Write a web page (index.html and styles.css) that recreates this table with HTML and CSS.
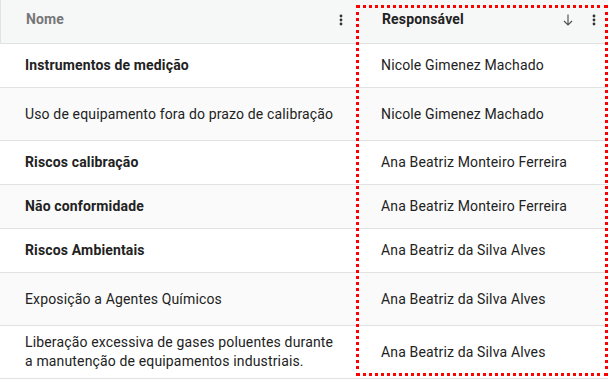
FILE: index.html
```html
<!DOCTYPE html>
<html lang="pt">
<head>
<meta charset="utf-8">
<link rel="stylesheet" href="styles.css">
</head>
<body>
<div class="wrap">
  <div class="table">
    <div class="row head">
      <div class="cell c1 hcell">
        <span class="htitle muted">Nome</span>
        <svg class="kebab k1" width="4" height="12" viewBox="0 0 4 12"><circle cx="2" cy="2" r="1.4"/><circle cx="2" cy="6" r="1.4"/><circle cx="2" cy="10" r="1.4"/></svg>
      </div>
      <div class="cell c2 hcell">
        <span class="htitle">Responsável</span>
        <svg class="arrow" width="10" height="12" viewBox="0 0 10 12"><path d="M5 0.5V11 M1 7l4 4 4-4" fill="none" stroke="#555" stroke-width="1.2"/></svg>
        <svg class="kebab k2" width="4" height="12" viewBox="0 0 4 12"><circle cx="2" cy="2" r="1.4"/><circle cx="2" cy="6" r="1.4"/><circle cx="2" cy="10" r="1.4"/></svg>
      </div>
    </div>
    <div class="row short"><div class="cell c1 b">Instrumentos de medição</div><div class="cell c2">Nicole Gimenez Machado</div></div>
    <div class="row tall alt"><div class="cell c1">Uso de equipamento fora do prazo de calibração</div><div class="cell c2">Nicole Gimenez Machado</div></div>
    <div class="row short"><div class="cell c1 b">Riscos calibração</div><div class="cell c2">Ana Beatriz Monteiro Ferreira</div></div>
    <div class="row short alt"><div class="cell c1 b">Não conformidade</div><div class="cell c2">Ana Beatriz Monteiro Ferreira</div></div>
    <div class="row short"><div class="cell c1 b">Riscos Ambientais</div><div class="cell c2">Ana Beatriz da Silva Alves</div></div>
    <div class="row tall alt"><div class="cell c1">Exposição a Agentes Químicos</div><div class="cell c2">Ana Beatriz da Silva Alves</div></div>
    <div class="row tall"><div class="cell c1">Liberação excessiva de gases poluentes durante a manutenção de equipamentos industriais.</div><div class="cell c2">Ana Beatriz da Silva Alves</div></div>
  </div>
  <div class="highlight"></div>
</div>
</body>
</html>
```

FILE: styles.css
```css
* { box-sizing: border-box; }
html, body { margin: 0; padding: 0; background: #fff; }
body {
  font-family: Roboto, "Liberation Sans", Arial, sans-serif;
  font-size: 14px;
  letter-spacing: 0.15px;
  color: #222;
}
.wrap {
  position: relative;
  width: 612px;
  height: 380px;
  overflow: hidden;
}
.table {
  width: 608px;
  display: flex;
  flex-direction: column;
}
.row {
  display: grid;
  grid-template-columns: 357px 1fr;
  border-bottom: 1px solid #e2e2e2;
  background: #fff;
}
.row.alt { background: #fafafa; }
.row.short { height: 44px; }
.row.tall { height: 53px; }
.row.head {
  height: 44px;
  background: #f6f7f7;
  border-left: 1px solid #e2e2e2;
}
.cell {
  display: flex;
  align-items: center;
  line-height: 19px;
}
.c1 { padding: 0 20px 0 25px; }
.c2 { padding: 0 12px 0 24px; }
.b { font-weight: 700; }
.hcell { padding-bottom: 4px; }
.head .c1 { padding-left: 25px; padding-right: 15px; }
.htitle { font-weight: 700; flex: 1; }
.muted { color: #777; }
.kebab { fill: #333; }
.arrow { margin-right: 19px; }
.highlight {
  position: absolute;
  left: 356px;
  top: 5px;
  width: 252px;
  height: 371px;
  border: 3px dotted #f00;
  pointer-events: none;
}
```
